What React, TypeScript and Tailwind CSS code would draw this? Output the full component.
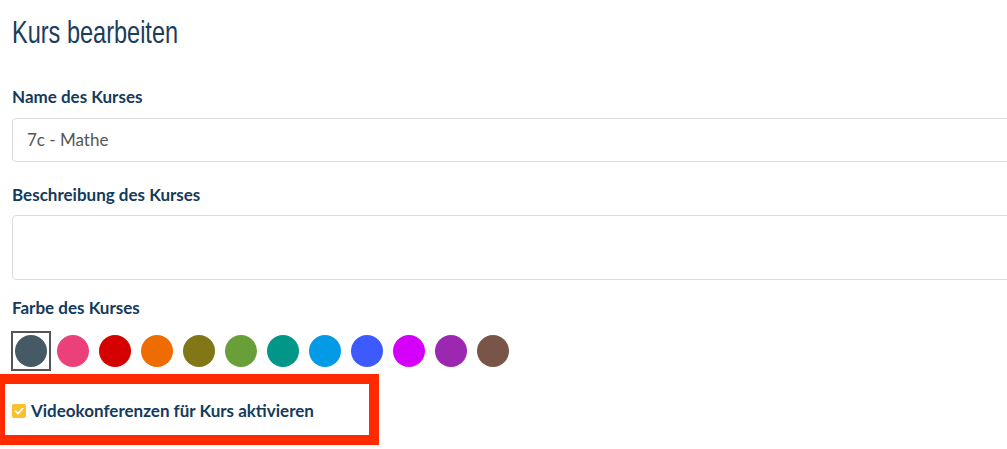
const swatches = [
  '#455a64',
  '#ec407a',
  '#d50000',
  '#ef6c00',
  '#827717',
  '#689f38',
  '#009688',
  '#039be5',
  '#3d5afe',
  '#d500f9',
  '#9c27b0',
  '#795548',
];

const Label = ({ children }: { children: string }) => (
  <div className="font-['Lato',sans-serif] text-[17px] leading-5 font-bold text-[#143a5c]">{children}</div>
);

export default function App() {
  return (
    <div className="h-[449px] w-full overflow-hidden bg-white pl-3 pt-[14px] font-['Lato',sans-serif]">
      {/* narrow heading face isn't available, so squeeze Liberation Sans */}
      <h1 className="h-9 font-['Liberation_Sans',sans-serif] text-[32px] leading-9 text-[#1b3d5c]">
        <span className="inline-block origin-left scale-x-[0.735]">Kurs bearbeiten</span>
      </h1>

      <div className="mt-[37px]">
        <Label>Name des Kurses</Label>
        <div className="mt-[11px] -mr-5 flex h-[44px] items-center rounded border border-[#dcdcdc] pl-[14px] text-[17px] text-[#555]">
          7c - Mathe
        </div>
      </div>

      <div className="mt-[23px]">
        <Label>Beschreibung des Kurses</Label>
        <div className="mt-[10px] -mr-5 h-[65px] rounded border border-[#dcdcdc]" />
      </div>

      <div className="mt-[18px]">
        <Label>Farbe des Kurses</Label>
        <div className="mt-[13px] -ml-px flex gap-[2px]">
          {swatches.map((c, i) => (
            <div
              key={c}
              className={
                i === 0
                  ? 'flex h-10 w-10 items-center justify-center border-2 border-[#555]'
                  : 'flex h-10 w-10 items-center justify-center'
              }
            >
              <div className="h-8 w-8 rounded-full" style={{ backgroundColor: c }} />
            </div>
          ))}
        </div>
      </div>

      <div className="mt-[3px] -ml-[17px] flex h-[71px] w-[384px] items-center border-[10px] border-[#ff2a00] pl-[7px] pt-[3px]">
        <div className="flex items-center gap-[5px]">
          <span className="flex h-[14px] w-[14px] items-center justify-center rounded-[2px] bg-[#fbc02d]">
            <svg viewBox="0 0 14 14" className="h-[14px] w-[14px]" fill="none">
              <path d="M3.5 7.2 L6 9.6 L10.6 4.6" stroke="#fff" strokeWidth="1.8" strokeLinecap="round" strokeLinejoin="round" />
            </svg>
          </span>
          <span className="text-[17px] leading-5 font-bold text-[#143a5c]">Videokonferenzen für Kurs aktivieren</span>
        </div>
      </div>
    </div>
  );
}
